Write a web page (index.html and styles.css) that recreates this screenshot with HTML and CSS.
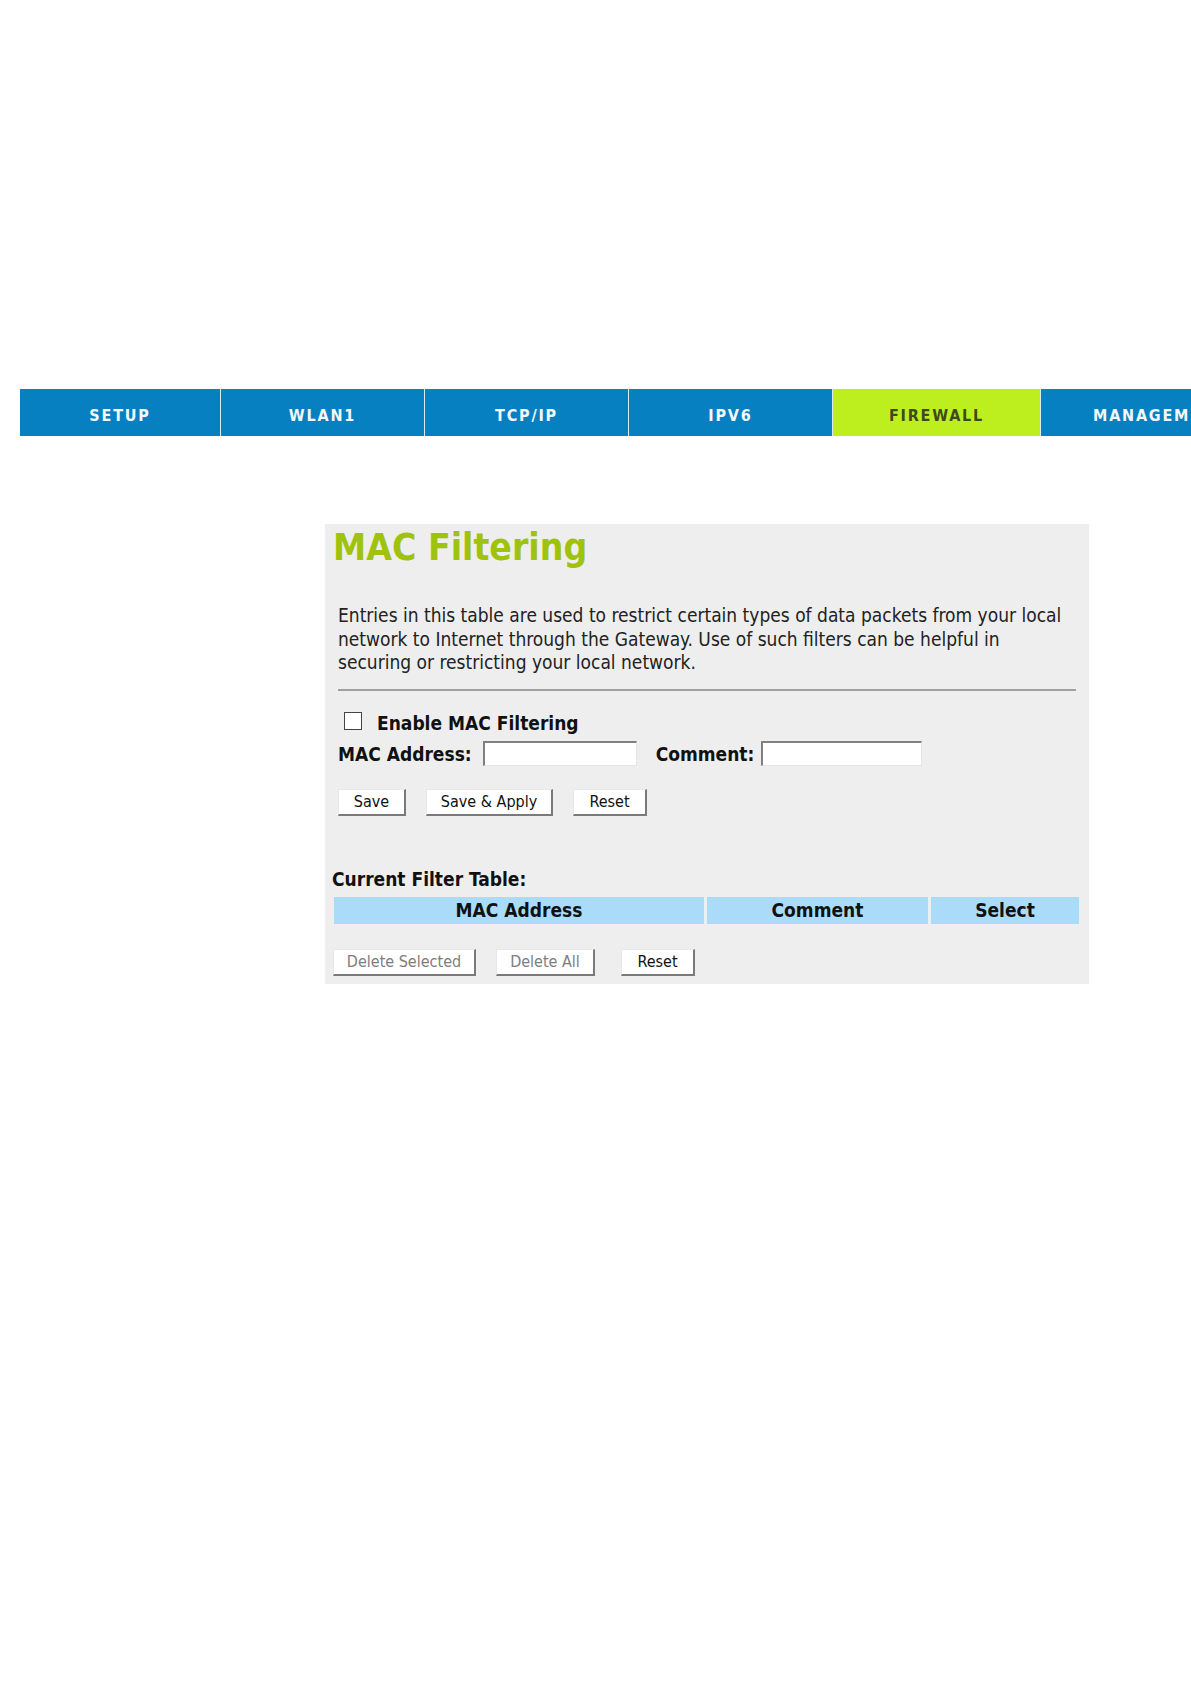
FILE: index.html
```html
<!DOCTYPE html>
<html>
<head>
<meta charset="utf-8">
<title>MAC Filtering</title>
<link rel="stylesheet" href="styles.css">
</head>
<body>
<nav class="nav">
  <div class="tab first">SETUP</div>
  <div class="tab">WLAN1</div>
  <div class="tab">TCP/IP</div>
  <div class="tab">IPV6</div>
  <div class="tab active">FIREWALL</div>
  <div class="tab last">MANAGEMENT</div>
</nav>
<main class="panel">
  <h1 class="title">MAC Filtering</h1>
  <p class="desc">Entries in this table are used to restrict certain types of data packets from your local<br>network to Internet through the Gateway. Use of such filters can be helpful in<br>securing or restricting your local network.</p>
  <hr class="rule">
  <div class="enable-row">
    <span class="checkbox"></span>
    <span class="bold">Enable MAC Filtering</span>
  </div>
  <div class="field-row">
    <span class="bold">MAC Address:</span>
    <span class="input mac"></span>
    <span class="bold comment-label">Comment:</span>
    <span class="input comment"></span>
  </div>
  <div class="btn-row">
    <span class="btn b-save">Save</span>
    <span class="btn b-apply">Save &amp; Apply</span>
    <span class="btn b-reset">Reset</span>
  </div>
  <div class="table-title bold">Current Filter Table:</div>
  <div class="thead">
    <div class="th c1">MAC Address</div>
    <div class="th c2">Comment</div>
    <div class="th c3">Select</div>
  </div>
  <div class="btn-row2">
    <span class="btn disabled b-dsel">Delete Selected</span>
    <span class="btn disabled b-dall">Delete All</span>
    <span class="btn b-reset2">Reset</span>
  </div>
</main>
</body>
</html>
```

FILE: styles.css
```css
html, body {
  margin: 0;
  padding: 0;
  background: #ffffff;
  overflow: hidden;
}
body {
  width: 1191px;
  height: 1684px;
  font-family: "DejaVu Sans Condensed", "DejaVu Sans", sans-serif;
  color: #1a1a1a;
}
.nav {
  display: flex;
  margin: 389px 0 0 20px;
  height: 47px;
  overflow: hidden;
  background: #d6ecf7;
  gap: 1px;
}
.tab {
  flex: 0 0 203px;
  box-sizing: border-box;
  padding-top: 6px;
  background: #0780c1;
  color: #f2f8fc;
  font-weight: bold;
  font-size: 16px;
  letter-spacing: 1.8px;
  display: flex;
  align-items: center;
  justify-content: center;
}
.tab.first { flex-basis: 200px; }
.tab.active {
  flex-basis: 207px;
  background: #bdee1e;
  color: #3e4a1c;
}
.tab.last {
  justify-content: flex-start;
  padding-left: 52px;
  white-space: nowrap;
}
.panel {
  margin: 88px 0 0 325px;
  width: 764px;
  height: 460px;
  background: #eeeeee;
  box-sizing: border-box;
  padding: 0 0 0 8px;
}
.title {
  margin: 0;
  padding-top: 2px;
  font-size: 37px;
  line-height: 44px;
  font-weight: bold;
  color: #9fc30c;
}
.desc {
  margin: 34px 0 0 5px;
  width: 760px;
  white-space: nowrap;
  font-size: 19px;
  line-height: 23.6px;
  color: #222;
}
.rule {
  margin: 14px 0 0 5px;
  width: 738px;
  border: 0;
  border-top: 2px solid #a0a0a0;
}
.bold {
  font-weight: bold;
  font-size: 19px;
  color: #111;
  white-space: nowrap;
}
.enable-row {
  display: flex;
  align-items: center;
  margin: 21px 0 0 11px;
  height: 22px;
}
.checkbox {
  width: 16px;
  height: 16px;
  border: 1.5px solid #444;
  background: #fff;
  margin-right: 15px;
  position: relative;
  top: -2px;
}
.field-row {
  display: flex;
  align-items: center;
  margin: 7px 0 0 5px;
  height: 26px;
}
.input {
  display: block;
  height: 22px;
  background: #fff;
  border-top: 2px solid #808080;
  border-left: 2px solid #808080;
  border-right: 1px solid #e4e4e4;
  border-bottom: 1px solid #e4e4e4;
  margin-left: 11px;
}
.mac { width: 151px; }
.comment-label { margin-left: 19px; }
.comment { width: 158px; margin-left: 7px; }
.btn-row {
  display: flex;
  margin: 22px 0 0 5px;
}
.btn {
  display: flex;
  align-items: center;
  justify-content: center;
  box-sizing: border-box;
  background: #ffffff;
  border-top: 1px solid #e8e8e8;
  border-left: 1px solid #e8e8e8;
  border-right: 2px solid #7a7a7a;
  border-bottom: 2px solid #7a7a7a;
  font-size: 16px;
  color: #111;
  height: 27px;
  white-space: nowrap;
}
.btn.disabled { color: #7d7d7d; }
.b-save { width: 68px; }
.b-apply { width: 127px; margin-left: 20px; }
.b-reset { width: 74px; margin-left: 20px; }
.table-title {
  margin: 51px 0 0 -1px;
  height: 24px;
  line-height: 24px;
}
.thead {
  display: flex;
  gap: 3px;
  margin: 6px 0 0 1px;
  height: 27px;
}
.th {
  background: #aadcfa;
  font-weight: bold;
  font-size: 19px;
  color: #111;
  display: flex;
  align-items: center;
  justify-content: center;
}
.c1 { width: 370px; }
.c2 { width: 221px; }
.c3 { width: 148px; }
.btn-row2 {
  display: flex;
  margin: 25px 0 0 0;
}
.b-dsel { width: 143px; }
.b-dall { width: 99px; margin-left: 20px; }
.b-reset2 { width: 74px; margin-left: 26px; }
```
